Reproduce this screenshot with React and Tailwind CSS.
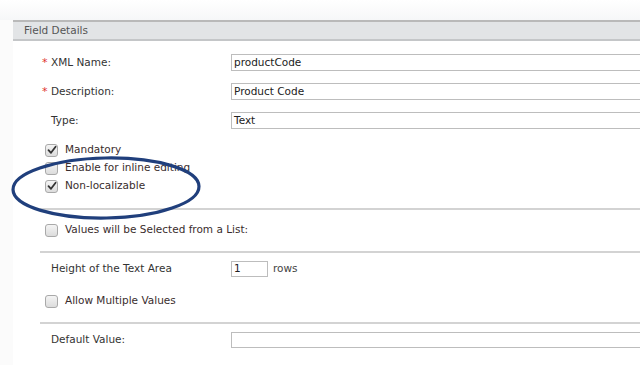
import React from "react";

const font = { fontFamily: '"DejaVu Sans", Verdana, sans-serif' };

function Check({ checked }) {
  return (
    <div className="w-[13px] h-[13px] rounded-[3px] border border-[#a9a9a9] bg-gradient-to-b from-[#f4f4f4] to-[#dcdcdc] flex items-center justify-center shrink-0">
      {checked && (
        <svg width="10" height="10" viewBox="0 0 10 10">
          <path d="M1.5 5.2 L4 7.8 L8.6 1.8" fill="none" stroke="#333" strokeWidth="1.8" strokeLinecap="round" strokeLinejoin="round" />
        </svg>
      )}
    </div>
  );
}

function FieldRow({ req, label, value }) {
  return (
    <div className="h-[29px] flex items-center">
      <div className="w-[218px] flex items-center pl-[29px]">
        <span className={"w-[9px] text-[#e0322d] text-[11px] leading-none " + (req ? "" : "invisible")}>*</span>
        <span className="text-[#333]">{label}</span>
      </div>
      <div className="flex-1 h-[17px] border border-[#bdbdbd] border-r-0 bg-white flex items-center pl-[2px] text-[#222]">
        {value}
      </div>
    </div>
  );
}

function CheckRow({ checked, label, className = "" }) {
  return (
    <div className={"h-[18px] flex items-center pl-[32px] gap-[7px] " + className}>
      <Check checked={checked} />
      <span className="text-[#3a2d2d]">{label}</span>
    </div>
  );
}

function Sep({ className = "" }) {
  return <div className={"h-[2px] bg-[#d3d3d3] ml-[27px] " + className} />;
}

export default function App() {
  return (
    <div className="w-[640px] h-[365px] bg-white relative overflow-hidden text-[10.5px]" style={font}>
      <div className="h-[20px] bg-gradient-to-b from-white to-[#f6f7f8]" />
      <div className="flex h-[345px]">
        <div className="w-[13px] bg-[#fbfbfb]" />
        <div className="flex-1 flex flex-col">
          <div className="h-[21px] border-t-2 border-b-2 border-t-[#b9b9b9] border-b-[#c4c6c8] bg-[#e2e4e6] flex items-center pl-[11px] text-[#555]">
            Field Details
          </div>
          <div className="pt-[7px] flex flex-col">
            <FieldRow req label="XML Name:" value="productCode" />
            <FieldRow req label="Description:" value="Product Code" />
            <FieldRow label="Type:" value="Text" />
            <div className="pt-[6px]">
              <CheckRow checked label="Mandatory" />
              <CheckRow label="Enable for inline editing" />
              <CheckRow checked label="Non-localizable" />
            </div>
            <Sep className="mt-[13px]" />
            <CheckRow label="Values will be Selected from a List:" className="mt-[11px]" />
            <Sep className="mt-[12px]" />
            <div className="mt-[7px] h-[18px] flex items-center">
              <div className="w-[218px] pl-[38px] text-[#333]">Height of the Text Area</div>
              <div className="w-[37px] h-[16px] border border-[#bdbdbd] flex items-center pl-[2px] text-[#222]">1</div>
              <span className="ml-[5px] text-[#444]">rows</span>
            </div>
            <CheckRow label="Allow Multiple Values" className="mt-[14px]" />
            <Sep className="mt-[12px]" />
            <div className="mt-[7px] h-[18px] flex items-center">
              <div className="w-[218px] pl-[38px] text-[#333]">Default Value:</div>
              <div className="flex-1 h-[16px] border border-[#bdbdbd] border-r-0" />
            </div>
          </div>
        </div>
      </div>
      <svg className="absolute left-0 top-0 pointer-events-none" width="640" height="365">
        <ellipse cx="106" cy="188" rx="93" ry="30" fill="none" stroke="#203f7c" strokeWidth="3.2" transform="rotate(-1 106 188)" />
      </svg>
    </div>
  );
}
